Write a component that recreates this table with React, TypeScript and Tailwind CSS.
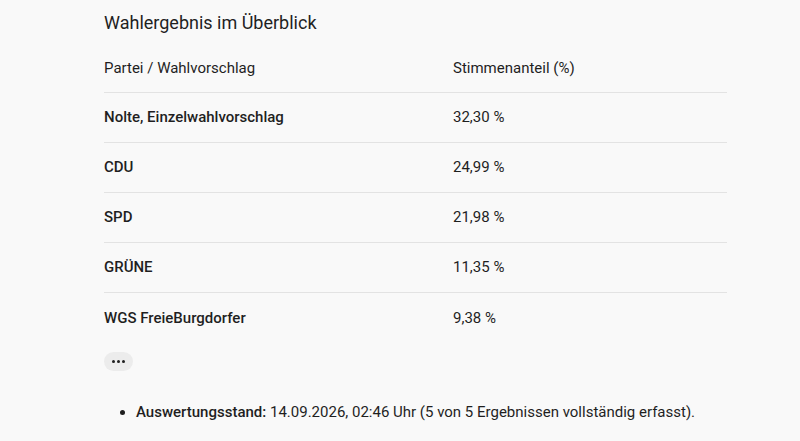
import React from "react";

const rows = [
  ["Nolte, Einzelwahlvorschlag", "32,30 %"],
  ["CDU", "24,99 %"],
  ["SPD", "21,98 %"],
  ["GRÜNE", "11,35 %"],
  ["WGS FreieBurgdorfer", "9,38 %"],
];

export default function App() {
  return (
    <div
      className="w-[800px] h-[441px] overflow-hidden bg-[#f9f9f9] text-[#1f1f1f]"
      style={{ fontFamily: "Roboto, 'Noto Sans', sans-serif" }}
    >
      <div className="pl-[104px] pr-[73px] pt-[11px]">
        <h2 className="text-[18px] leading-[24px] font-normal">Wahlergebnis im Überblick</h2>
        <div className="mt-[12px]">
          <div className="flex h-[46px] items-center border-b border-[#e3e3e3] text-[15px] pb-[2px]">
            <div className="w-[349px]">Partei / Wahlvorschlag</div>
            <div>Stimmenanteil (%)</div>
          </div>
          {rows.map(([p, v], i) => (
            <div
              key={p}
              className={`flex h-[50px] items-center text-[15px] ${i < rows.length - 1 ? "border-b border-[#e3e3e3]" : ""}`}
            >
              <div className="w-[349px] font-medium">{p}</div>
              <div>{v}</div>
            </div>
          ))}
        </div>
        <div className="mt-[9px] flex h-[19px] w-[29px] items-center justify-center rounded-full bg-[#ececec] gap-[2px]">
          <span className="h-[3px] w-[3px] rounded-full bg-[#1f1f1f]" />
          <span className="h-[3px] w-[3px] rounded-full bg-[#1f1f1f]" />
          <span className="h-[3px] w-[3px] rounded-full bg-[#1f1f1f]" />
        </div>
        <ul className="mt-[30px] pl-[32px] list-disc text-[15px]">
          <li>
            <span className="font-medium">Auswertungsstand:</span> 14.09.2026, 02:46 Uhr (5 von 5 Ergebnissen vollständig erfasst).
          </li>
        </ul>
      </div>
    </div>
  );
}
